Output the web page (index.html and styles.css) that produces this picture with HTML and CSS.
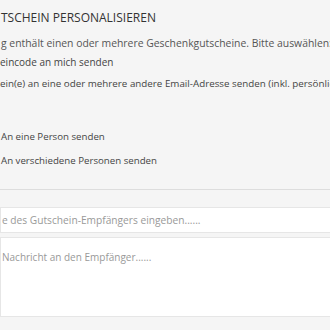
FILE: index.html
```html
<!DOCTYPE html>
<html lang="de">

<head>
  <meta charset="UTF-8" />
  <meta name="viewport" content="width=device-width, initial-scale=1.0" />
  <title>Gutschein personalisieren</title>
  <link rel="stylesheet" href="styles.css">
</head>

<body>
  <div class="panel">
    <h2 class="panel-title">TSCHEIN PERSONALISIEREN</h2>
    <p class="intro">g enthält einen oder mehrere Geschenkgutscheine. Bitte auswählen:</p>

    <div class="option">eincode an mich senden</div>
    <div class="option option-wide">ein(e) an eine oder mehrere andere Email-Adresse senden (inkl. persönlicher Nachricht)</div>

    <div class="sub-options">
      <div class="sub-option">An eine Person senden</div>
      <div class="sub-option">An verschiedene Personen senden</div>
    </div>

    <div class="divider"></div>

    <form class="recipient">
      <input type="text" class="field" placeholder="e des Gutschein-Empfängers eingeben......" />
      <textarea class="field field-message" placeholder="Nachricht an den Empfänger......"></textarea>
    </form>
  </div>
</body>

</html>
```

FILE: styles.css
```css
/* Global Styles */
* {
  box-sizing: border-box;
  margin: 0;
  padding: 0;
  font-family: "Open Sans", "Noto Sans", sans-serif;
}

body {
  background: #f5f5f5;
  color: #555555;
  overflow: hidden;
}

/* Panel */
.panel {
  padding-top: 10px;
  white-space: nowrap;
}

.panel-title {
  font-size: 12px;
  font-weight: 400;
  color: #333333;
  line-height: 16px;
  margin-left: 1px;
  margin-bottom: 9px;
}

.intro {
  font-size: 10.4px;
  line-height: 16px;
  margin-left: 1px;
}

.option {
  font-size: 10px;
  line-height: 14px;
  margin-top: 4px;
  color: #444444;
}

.option + .option {
  margin-top: 8px;
}

.option-wide {
  font-size: 9.8px;
}

.sub-options {
  padding-top: 39px;
}

.sub-option {
  font-size: 9.7px;
  line-height: 14px;
  margin-left: 1px;
  margin-bottom: 10px;
  color: #444444;
}

.divider {
  margin-top: 21px;
  border-top: 1px solid #dddddd;
}

/* Recipient form */
.recipient {
  display: flex;
  flex-direction: column;
  gap: 4px;
  padding-top: 17px;
}

.field {
  display: block;
  width: 340px;
  height: 26px;
  background: #ffffff;
  border: 1px solid #e6e6e6;
  padding: 0 0 0 1px;
  font-size: 10.2px;
  color: #555555;
  outline: none;
  resize: none;
}

.field-message {
  height: 80px;
  padding-top: 12px;
  font-size: 10px;
}

.field::placeholder {
  color: #999999;
}
```
